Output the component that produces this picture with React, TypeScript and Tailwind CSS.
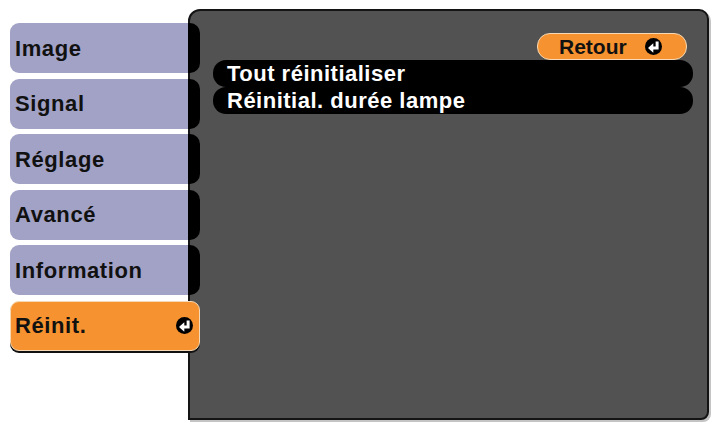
import React from "react";

const font = { fontFamily: '"Liberation Sans", Arial, sans-serif' };

const EnterIcon = () => (
  <svg width="17" height="17" viewBox="0 0 16 16" className="shrink-0">
    <circle cx="8" cy="8" r="8" fill="#000" />
    <path d="M11.4 3.2V9.4H7" stroke="#fff" strokeWidth="2.8" fill="none" />
    <polygon points="2.8,9.4 7.8,5 7.8,13.8" fill="#fff" />
  </svg>
);

const tabs = ["Image", "Signal", "Réglage", "Avancé", "Information"];

const Tab = ({ label }: { label: string }) => (
  <div className="flex h-[50px]">
    <div className="flex w-[178px] items-center rounded-l-[9px] bg-[#a2a2c6] pl-[5px] text-[22px] font-bold tracking-[0.6px] text-[#111]">
      {label}
    </div>
    <div className="w-[12px] rounded-r-[10px] bg-black" />
  </div>
);

const ActiveTab = ({ label }: { label: string }) => (
  <div className="flex h-[50px] w-[190px] items-center justify-between rounded-[9px] border border-[#f6d9b4] bg-[#f6922f] pl-[4px] pr-[6px] text-[22px] font-bold tracking-[0.6px] text-[#111] shadow-[0_2px_0_#111]">
    {label}
    <EnterIcon />
  </div>
);

const Row = ({ label }: { label: string }) => (
  <div className="flex h-[27px] items-center rounded-[13px] bg-black pl-[14px] text-[22px] font-bold tracking-[0.5px] text-white">
    {label}
  </div>
);

export default function App() {
  return (
    <div className="h-[426px] w-[715px] overflow-hidden bg-white" style={font}>
      <div className="flex pl-[10px] pt-[9px]">
        <div className="relative z-10 mt-[14px] flex flex-col gap-[5.5px]">
          {tabs.map((t) => (
            <Tab key={t} label={t} />
          ))}
          <ActiveTab label="Réinit." />
        </div>
        <div className="-ml-[12px] h-[411px] w-[521px] rounded-tl-[12px] rounded-tr-[10px] rounded-br-[8px] border-2 border-[#141414] bg-[#525252] shadow-[2px_2px_0_#c4c4c4]">
          <div className="flex justify-end pr-[20px] pt-[22px]">
            <div className="flex h-[27px] w-[150px] items-center gap-[18px] rounded-[13px] border border-[#f6d9b4] bg-[#f6922f] pl-[21px] text-[21px] font-bold text-[#111]">
              Retour
              <EnterIcon />
            </div>
          </div>
          <div className="flex flex-col pl-[23px] pr-[14px]">
            <Row label="Tout réinitialiser" />
            <Row label="Réinitial. durée lampe" />
          </div>
        </div>
      </div>
    </div>
  );
}
